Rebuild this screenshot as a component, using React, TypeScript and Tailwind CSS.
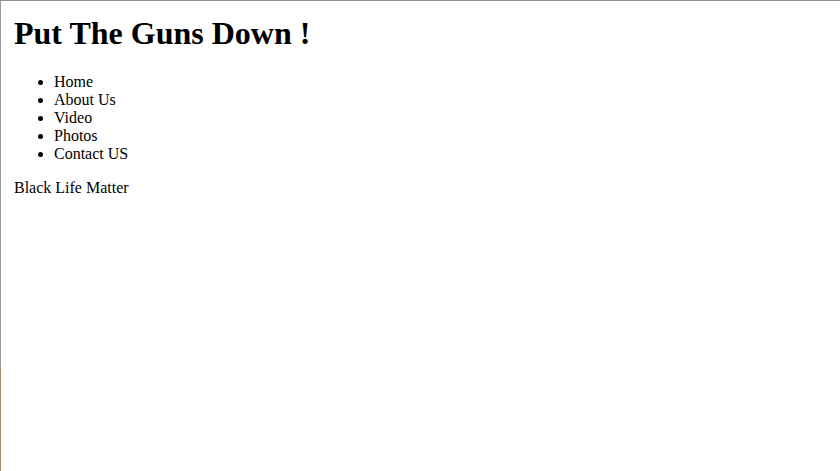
export default function App() {
  const links = ['Home', 'About Us', 'Video', 'Photos', 'Contact US']

  return (
    <div className="flex h-[471px] w-[840px] overflow-hidden border-t border-[#8f8f8f] bg-white text-black">
      {/* window edge */}
      <div className="flex w-px flex-col">
        <div className="h-[365px] bg-[#9a9a9a]" />
        <div className="flex-1 bg-[#a58f6c]" />
      </div>

      <div className="flex-1 pl-[13px] font-['Liberation_Serif',serif]">
        <h1 className="mt-[14px] text-[32px] leading-[37px] font-bold">Put The Guns Down !</h1>

        <ul className="mt-[21px] list-disc pl-10 text-[16px] leading-[18px]">
          {links.map((l) => (
            <li key={l}>{l}</li>
          ))}
        </ul>

        <p className="mt-4 text-[16px] leading-[18px]">Black Life Matter</p>
      </div>
    </div>
  )
}
